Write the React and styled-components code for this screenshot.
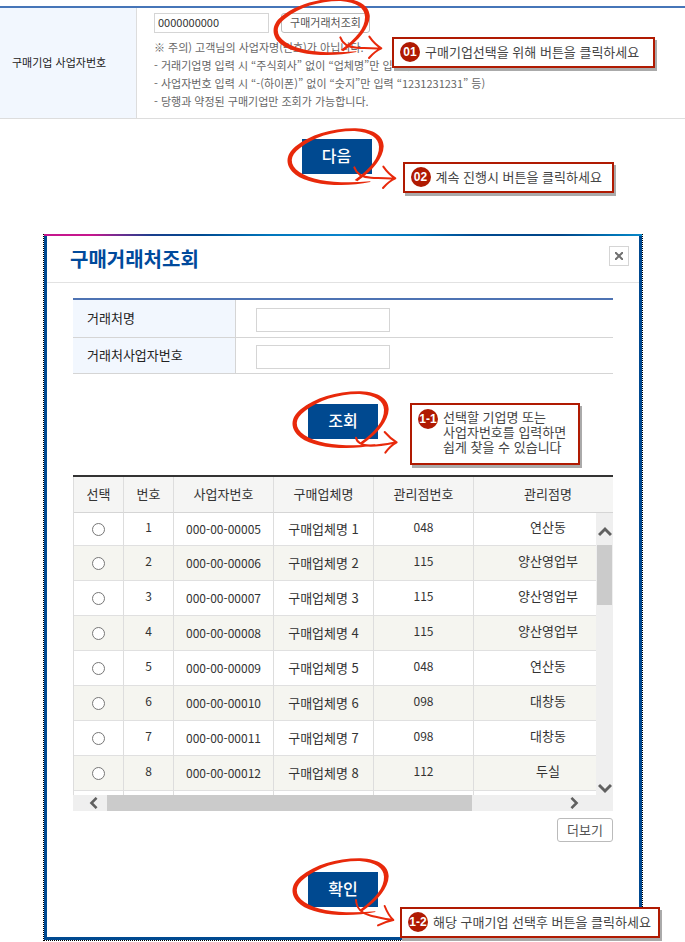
import { useState } from 'react';
import styled, { createGlobalStyle } from 'styled-components';

const GlobalStyle = createGlobalStyle`
  * {
    box-sizing: border-box;
  }

  body {
    margin: 0;
    background: #fff;
    color: #333;
    font-family: 'Noto Sans CJK KR', 'Liberation Sans', sans-serif;
    font-size: 13px;
    overflow-x: hidden;
  }

  button,
  input {
    font-family: inherit;
  }
`;

const Page = styled.main`
  padding-top: 6px;
`;

const CompanyField = styled.section`
  display: flex;
  border-top: 2px solid #4675b8;
  border-bottom: 1px solid #ddd;
`;

const CompanyLabel = styled.label`
  display: flex;
  align-items: center;
  flex: 0 0 137px;
  padding: 0 0 3px 12px;
  border-right: 1px solid #ddd;
  background: #f2f7fe;
  color: #222;
  font-size: 11px;
`;

const CompanyBody = styled.div`
  flex: 1;
  padding: 5px 17px 8px;
`;

const InputRow = styled.div`
  display: flex;
  gap: 12px;
  margin-bottom: 5px;
`;

const TextInput = styled.input`
  width: ${(props) => props.$width};
  height: ${(props) => props.$height};
  padding: 0 3px 2px;
  border: 1px solid #d5d5d5;
  background: #fff;
  color: #333;
  font-size: 11px;
`;

const LineButton = styled.button`
  width: ${(props) => props.$width};
  height: ${(props) => props.$height};
  padding: 0 0 2px;
  border: 1px solid #bbb;
  border-radius: 3px;
  background: #fff;
  color: #555;
  font-size: ${(props) => props.$size};
  line-height: 1;
  white-space: nowrap;
`;

const Notes = styled.ul`
  margin: 0;
  padding: 0;
  list-style: none;
  color: #666;
  font-size: 11px;
  line-height: 18px;
  white-space: nowrap;
`;

const Actions = styled.div`
  display: flex;
  justify-content: center;
  padding: ${(props) => props.$padding};
`;

const Anchor = styled.div`
  position: relative;
  display: flex;
`;

const BlueButton = styled.button`
  width: 70px;
  height: 35px;
  padding: 0 0 4px;
  border: 0;
  background: #004990;
  color: #fff;
  font-size: 16px;
  font-weight: 500;
  line-height: 1;
`;

const Scribble = styled.svg`
  position: absolute;
  z-index: 1;
  top: ${(props) => props.$top};
  left: ${(props) => props.$left};
  width: 110px;
  height: 65px;
  overflow: visible;
  pointer-events: none;
`;

const Callout = styled.div`
  position: absolute;
  z-index: 2;
  top: ${(props) => props.$top};
  left: ${(props) => props.$left};
  display: flex;
  gap: 5px;
  width: ${(props) => props.$width};
  padding: ${(props) => props.$padding || '3px 6px 4px'};
  border: 2px solid #b01a02;
  background: #fff;
  box-shadow: 2px 3px 0 #aaa;
  color: #444;
  white-space: nowrap;
`;

const Badge = styled.b`
  display: flex;
  align-items: center;
  justify-content: center;
  flex: 0 0 20px;
  height: 20px;
  border-radius: 50%;
  background: #b01a02;
  color: #fff;
  font-family: 'Liberation Sans', sans-serif;
  font-size: 12px;
`;

const CalloutText = styled.span`
  line-height: ${(props) => props.$lineHeight || '20px'};
  white-space: pre-line;
`;

const Dialog = styled.section`
  margin: 0 42px 0 43px;
  border: 1px dotted #000;
  border-top: 0;
`;

const DialogStripe = styled.div`
  height: 2px;
  background: linear-gradient(
    90deg,
    #c6168d 0%,
    #c6168d 8%,
    #7a2a90 12%,
    #1a3f8d 18%,
    #004990 26%,
    #0077bd 38%,
    #0a84cc 50%,
    #0075bb 62%,
    #004990 72%,
    #004588 86%,
    #0077b9 96%,
    #0a88c8 100%
  );
`;

const DialogFrame = styled.div`
  border: 3px solid #004990;
  border-top: 0;
`;

const DialogHeader = styled.header`
  display: flex;
  align-items: flex-start;
  justify-content: space-between;
  height: 47px;
  padding: 8px 10px 0 23px;
  border-bottom: 1px solid #e2e2e2;
`;

const DialogTitle = styled.h1`
  margin: 0;
  color: #004a9c;
  font-size: 20px;
  font-weight: 700;
  line-height: 30px;
`;

const CloseButton = styled.button`
  display: flex;
  align-items: center;
  justify-content: center;
  width: 20px;
  height: 20px;
  margin-top: 2px;
  padding: 0;
  border: 1px solid #d5d5d5;
  background: #fff;
`;

const DialogBody = styled.div`
  padding: 15px 26px 0;
`;

const SearchForm = styled.div`
  border-top: 2px solid #4e73b3;
`;

const SearchRow = styled.div`
  display: flex;
  height: ${(props) => props.$height};
  border-bottom: 1px solid #d5d5d5;
`;

const SearchLabel = styled.label`
  display: flex;
  align-items: center;
  flex: 0 0 163px;
  padding: 0 0 3px 14px;
  border-right: 1px solid #d5d5d5;
  background: #f2f7fe;
  color: #222;
`;

const SearchField = styled.div`
  display: flex;
  align-items: center;
  padding: 2px 0 0 20px;
`;

const TableBox = styled.div`
  position: relative;
  border-top: 2px solid #333;
`;

const TableView = styled.div`
  height: 318px;
  overflow: hidden;
`;

// wider than its view, the last column runs under the scroll bar
const Table = styled.table`
  width: calc(100% + 10px);
  border-collapse: separate;
  border-spacing: 0;
  border-left: 1px solid #ddd;
  table-layout: fixed;
  line-height: 20px;
  text-align: center;
`;

const Col = styled.col`
  width: ${(props) => props.$width};
`;

const HeadCell = styled.th`
  height: 36px;
  padding: 0 0 2px;
  border-right: 1px solid #ddd;
  border-bottom: 1px solid #d5d5d5;
  background: #f5f5f4;
  color: #333;
  font-weight: 400;
`;

const Row = styled.tr`
  height: ${(props) => (props.$first ? '33px' : '35px')};
  background: ${(props) => (props.$shaded ? '#f5f5f0' : '#fff')};
`;

const Cell = styled.td`
  padding: ${(props) => (props.$raised ? '0 0 5px' : '0')};
  border-right: 1px solid #ddd;
  border-bottom: 1px solid #e0e0e0;
  font-size: ${(props) => (props.$digits ? '12px' : '13px')};
`;

const Radio = styled.input`
  display: block;
  width: 13px;
  height: 13px;
  margin: 0 auto;
  appearance: none;
  border: 1px solid #777;
  border-radius: 50%;
  background: #fff;

  &:checked {
    box-shadow: inset 0 0 0 3px #fff;
    background: #555;
  }
`;

const VerticalBar = styled.div`
  position: absolute;
  top: 36px;
  right: 0;
  bottom: 16px;
  display: flex;
  flex-direction: column;
  width: 17px;
  padding: 12px 1px 0;
  background: #efefef;
`;

const HorizontalBar = styled.div`
  display: flex;
  height: 16px;
  padding: 0 33px 0 15px;
  background: #efefef;
`;

const VerticalThumb = styled.div`
  height: 60px;
  margin: 6px 0 auto;
  background: #cbcbcb;
`;

const HorizontalThumb = styled.div`
  flex: 0 1 365px;
  margin: 0 auto 0 7px;
  background: #cbcbcb;
`;

const ScrollButton = styled.button`
  display: flex;
  align-items: center;
  justify-content: center;
  width: ${(props) => props.$width};
  height: ${(props) => props.$height};
  padding: 0;
  border: 0;
  background: none;
`;

const MoreRow = styled.div`
  display: flex;
  justify-content: flex-end;
  padding-top: 7px;
`;

const arrows = {
  flat: 'M228 158 C231 176 246 181 270 182 S318 178 348 172 M314 141 Q330 160 350 172 Q332 181 316 203',
  long: 'M238 136 C244 154 262 166 288 167 S334 170 360 169 M325 134 Q341 157 361 169 Q342 177 324 198',
  steep: 'M228 144 C230 174 248 185 273 191 S318 203 339 204 M314 162 Q325 190 340 204 Q319 208 294 220',
};

const HandMark = ({ top, left, arrow = 'flat' }) => (
  <Scribble $top={top} $left={left} viewBox="33 15 330 195" aria-hidden="true">
    <path
      fill="#e8290b"
      fillRule="evenodd"
      d="M286 180 C205 198 104 189 62 158 C30 134 29 99 62 73 C105 38 173 18 242 19 C297 21 326 43 326 73 C325 108 294 145 247 178 L239 174 C287 139 313 106 312 74 C311 48 287 31 239 27 C176 26 115 46 75 78 C43 101 42 128 73 150 C115 180 201 185 286 178 Z"
    />
    <path
      d={arrows[arrow]}
      fill="none"
      stroke="#e8290b"
      strokeWidth="6"
      strokeLinecap="round"
      strokeLinejoin="round"
    />
  </Scribble>
);

const chevrons = {
  up: 'M1 9 L7 3 L13 9',
  down: 'M1 3 L7 9 L13 3',
  left: 'M10 0 L4 6 L10 12',
  right: 'M4 0 L10 6 L4 12',
};

const Chevron = ({ direction }) => (
  <svg width="14" height="12" viewBox="0 0 14 12" aria-hidden="true">
    <path d={chevrons[direction]} fill="none" stroke="#606060" strokeWidth="3" />
  </svg>
);

const columns = [
  ['선택', '50px'],
  ['번호', '50px'],
  ['사업자번호', '100px'],
  ['구매업체명', '100px'],
  ['관리점번호', '100px'],
  ['관리점명', 'auto'],
];

const companies = [
  ['000-00-00005', '구매업체명 1', '048', '연산동'],
  ['000-00-00006', '구매업체명 2', '115', '양산영업부'],
  ['000-00-00007', '구매업체명 3', '115', '양산영업부'],
  ['000-00-00008', '구매업체명 4', '115', '양산영업부'],
  ['000-00-00009', '구매업체명 5', '048', '연산동'],
  ['000-00-00010', '구매업체명 6', '098', '대창동'],
  ['000-00-00011', '구매업체명 7', '098', '대창동'],
  ['000-00-00012', '구매업체명 8', '112', '두실'],
];

const CompanyTable = () => {
  const [selected, setSelected] = useState(null);

  return (
    <TableBox>
      <TableView>
        <Table>
          <colgroup>
            {columns.map(([name, width]) => (
              <Col key={name} $width={width} />
            ))}
          </colgroup>
          <thead>
            <tr>
              {columns.map(([name]) => (
                <HeadCell key={name} scope="col">{name}</HeadCell>
              ))}
            </tr>
          </thead>
          <tbody>
            {companies.map(([id, name, code, branch], index) => (
              <Row key={id} $first={index === 0} $shaded={index % 2 === 1}>
                <Cell>
                  <Radio
                    type="radio"
                    name="company"
                    aria-label={name}
                    checked={selected === id}
                    onChange={() => setSelected(id)}
                  />
                </Cell>
                <Cell $digits $raised>{index + 1}</Cell>
                <Cell $digits>{id}</Cell>
                <Cell>{name}</Cell>
                <Cell $digits $raised>{code}</Cell>
                <Cell $raised>{branch}</Cell>
              </Row>
            ))}
            <Row>
              {columns.map(([name]) => (
                <Cell key={name} />
              ))}
            </Row>
          </tbody>
        </Table>
      </TableView>
      <VerticalBar>
        <ScrollButton type="button" aria-label="위로" $width="15px" $height="14px">
          <Chevron direction="up" />
        </ScrollButton>
        <VerticalThumb />
        <ScrollButton type="button" aria-label="아래로" $width="15px" $height="14px">
          <Chevron direction="down" />
        </ScrollButton>
      </VerticalBar>
      <HorizontalBar>
        <ScrollButton type="button" aria-label="왼쪽으로" $width="12px" $height="16px">
          <Chevron direction="left" />
        </ScrollButton>
        <HorizontalThumb />
        <ScrollButton type="button" aria-label="오른쪽으로" $width="12px" $height="16px">
          <Chevron direction="right" />
        </ScrollButton>
      </HorizontalBar>
    </TableBox>
  );
};

const App = () => (
  <>
    <GlobalStyle />
    <Page lang="ko">
      <CompanyField>
        <CompanyLabel htmlFor="company-number">구매기업 사업자번호</CompanyLabel>
        <CompanyBody>
          <InputRow>
            <TextInput id="company-number" defaultValue="0000000000" $width="115px" $height="20px" />
            <Anchor>
              <LineButton type="button" $width="89px" $height="20px" $size="11px">
                구매거래처조회
              </LineButton>
              <HandMark top="-16px" left="-9px" arrow="long" />
              <Callout $top="24px" $left="111px" $width="263px">
                <Badge>01</Badge>
                <CalloutText>구매기업선택을 위해 버튼을 클릭하세요</CalloutText>
              </Callout>
            </Anchor>
          </InputRow>
          <Notes>
            <li>※ 주의) 고객님의 사업자명(번호)가 아닙니다.</li>
            <li>- 거래기업명 입력 시 “주식회사” 없이 “업체명”만 입력 (“덕산건설” 등)</li>
            <li>- 사업자번호 입력 시 “-(하이폰)” 없이 “숫지”만 입력 “1231231231” 등)</li>
            <li>- 당행과 약정된 구매기업만 조회가 가능합니다.</li>
          </Notes>
        </CompanyBody>
      </CompanyField>

      <Actions $padding="20px 12px 60px 0">
        <Anchor>
          <BlueButton type="button">다음</BlueButton>
          <HandMark top="-12px" left="-16px" arrow="long" />
          <Callout $top="23px" $left="101px" $width="211px">
            <Badge>02</Badge>
            <CalloutText>계속 진행시 버튼을 클릭하세요</CalloutText>
          </Callout>
        </Anchor>
      </Actions>

      <Dialog role="dialog" aria-labelledby="dialog-title">
        <DialogStripe />
        <DialogFrame>
          <DialogHeader>
            <DialogTitle id="dialog-title">구매거래처조회</DialogTitle>
            <CloseButton type="button" aria-label="닫기">
              <svg width="8" height="8" viewBox="0 0 8 8" aria-hidden="true">
                <path d="M0 0 L8 8 M8 0 L0 8" stroke="#707070" strokeWidth="2" />
              </svg>
            </CloseButton>
          </DialogHeader>
          <DialogBody>
            <SearchForm>
              <SearchRow $height="38px">
                <SearchLabel htmlFor="client-name">거래처명</SearchLabel>
                <SearchField>
                  <TextInput id="client-name" $width="134px" $height="24px" />
                </SearchField>
              </SearchRow>
              <SearchRow $height="36px">
                <SearchLabel htmlFor="client-number">거래처사업자번호</SearchLabel>
                <SearchField>
                  <TextInput id="client-number" $width="134px" $height="24px" />
                </SearchField>
              </SearchRow>
            </SearchForm>
            <Actions $padding="30px 0 36px">
              <Anchor>
                <BlueButton type="button">조회</BlueButton>
                <HandMark top="-14px" left="-17px" />
                <Callout $top="-1px" $left="102px" $width="170px" $padding="4px 6px 9px">
                  <Badge>1-1</Badge>
                  <CalloutText $lineHeight="15px">
                    {'선택할 기업명 또는\n사업자번호를 입력하면\n쉽게 찾을 수 있습니다'}
                  </CalloutText>
                </Callout>
              </Anchor>
            </Actions>
            <CompanyTable />
            <MoreRow>
              <LineButton type="button" $width="56px" $height="24px" $size="13px">더보기</LineButton>
            </MoreRow>
            <Actions $padding="30px 0">
              <Anchor>
                <BlueButton type="button">확인</BlueButton>
                <HandMark top="-15px" left="-17px" arrow="steep" />
                <Callout $top="35px" $left="92px" $width="260px">
                  <Badge>1-2</Badge>
                  <CalloutText>해당 구매기업 선택후 버튼을 클릭하세요</CalloutText>
                </Callout>
              </Anchor>
            </Actions>
          </DialogBody>
        </DialogFrame>
      </Dialog>
    </Page>
  </>
);

export default App;
